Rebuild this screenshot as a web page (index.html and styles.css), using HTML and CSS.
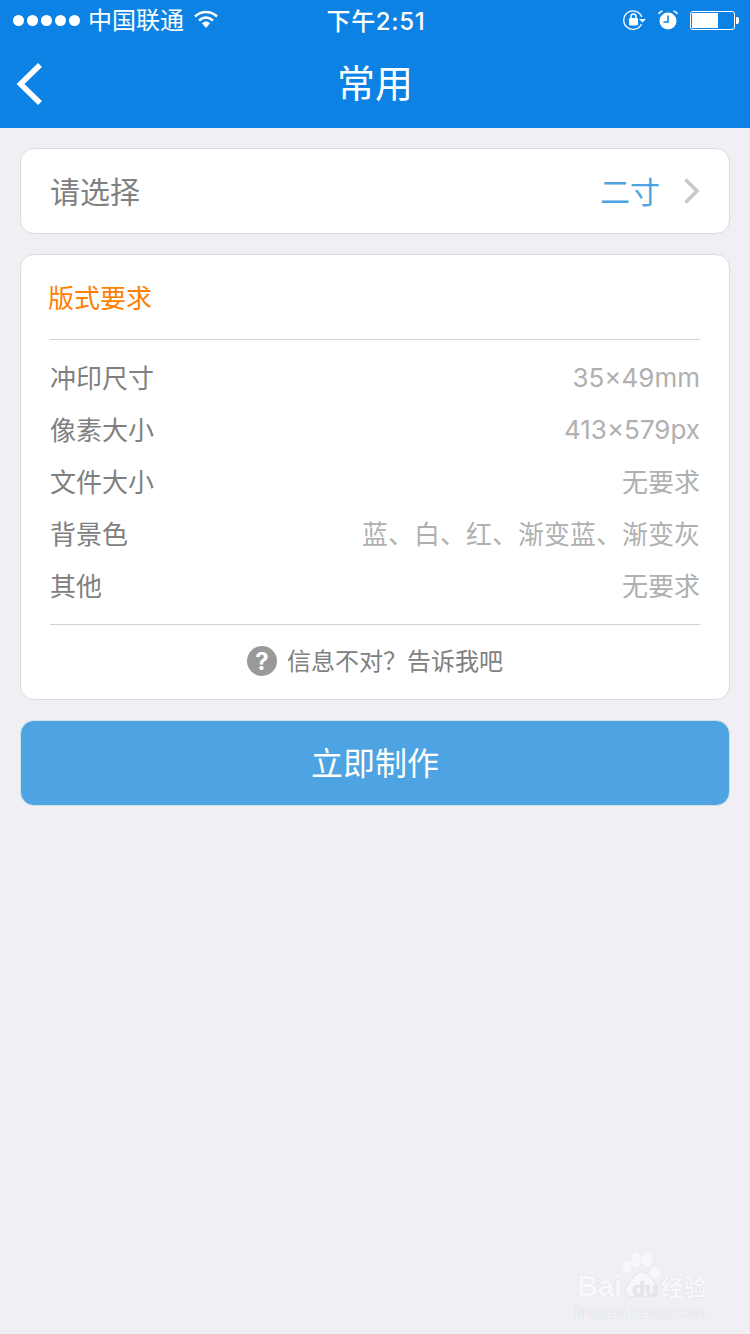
FILE: index.html
```html
<!DOCTYPE html>
<html lang="zh-CN">
<head>
<meta charset="UTF-8">
<meta name="viewport" content="width=device-width, initial-scale=1.0">
<title>常用</title>
<link rel="stylesheet" href="styles.css">
</head>
<body>

<div class="page">
    <header class="header">
        <div class="status">
            <div class="status-left">
                <span class="dots"><i></i><i></i><i></i><i></i><i></i></span>
                <span class="carrier">中国联通</span>
                <svg class="wifi" width="26" height="20" viewBox="0 0 26 20">
                    <path d="M2 7.500C8.500 1.500 17.500 1.500 24 7.500" fill="none" stroke="#fff" stroke-width="2.400"/>
                    <path d="M6 11.500C10.500 7.500 15.500 7.500 20 11.500" fill="none" stroke="#fff" stroke-width="2.400"/>
                    <path d="M9 14.200C11.500 12 14.500 12 17 14.200L13 19Z" fill="#fff"/>
                </svg>
            </div>
            <div class="status-time">下午2:51</div>
            <div class="status-right">
                <svg width="26" height="22" viewBox="0 0 26 22">
                    <path d="M21.500 15A9.300 9.300 0 1 1 21.800 8" fill="none" stroke="#fff" stroke-width="1.300"/>
                    <path d="M19 10h7l-3.500 3.500z" fill="#fff"/>
                    <rect x="9" y="9" width="9" height="7.500" rx="1" fill="#fff"/>
                    <path d="M11 9V7.500a2.500 2.500 0 0 1 5 0V9" fill="none" stroke="#fff" stroke-width="1.500"/>
                </svg>
                <svg class="alarm" width="22" height="22" viewBox="0 0 22 22">
                    <circle cx="11" cy="12" r="8.500" fill="#fff"/>
                    <path d="M11 6.500V13H6.500" fill="none" stroke="#0c83e4" stroke-width="1.500"/>
                    <path d="M1.500 5C2.500 3 3.500 2.500 5.500 2M20.500 5C19.500 3 18.500 2.500 16.500 2" fill="none" stroke="#fff" stroke-width="1.500"/>
                </svg>
                <span class="battery"><span class="battery-fill"></span></span>
            </div>
        </div>
        <div class="nav">
            <svg class="back" width="28" height="44" viewBox="0 0 28 44">
                <path d="M25 3L5.500 22L25 41" fill="none" stroke="#fff" stroke-width="5.500"/>
            </svg>
            <h1>常用</h1>
        </div>
    </header>

    <main class="content">
        <div class="card select-row">
            <span class="select-label">请选择</span>
            <span class="select-value">二寸</span>
            <svg class="arrow" width="18" height="28" viewBox="0 0 18 28">
                <path d="M2.500 2.500L14 14L2.500 25.500" fill="none" stroke="#c8c8c8" stroke-width="3.500"/>
            </svg>
        </div>

        <div class="card info">
            <div class="info-title">版式要求</div>
            <div class="info-rows">
                <div class="row"><span>冲印尺寸</span><span class="val val-num">35×49mm</span></div>
                <div class="row"><span>像素大小</span><span class="val val-num">413×579px</span></div>
                <div class="row"><span>文件大小</span><span class="val">无要求</span></div>
                <div class="row"><span>背景色</span><span class="val">蓝、白、红、渐变蓝、渐变灰</span></div>
                <div class="row"><span>其他</span><span class="val">无要求</span></div>
            </div>
            <div class="feedback">
                <span class="help">?</span>
                <span>信息不对？告诉我吧</span>
            </div>
        </div>

        <button class="make">立即制作</button>
    </main>

    <div class="watermark">
        <svg class="paw" width="44" height="46" viewBox="0 0 44 46">
            <ellipse cx="7" cy="14" rx="5" ry="6" fill="#f8f8fb"/>
            <ellipse cx="16" cy="7" rx="5" ry="7" fill="#f8f8fb"/>
            <ellipse cx="27" cy="7" rx="5" ry="7" fill="#f8f8fb"/>
            <ellipse cx="35" cy="20" rx="5" ry="6" fill="#f8f8fb"/>
            <path d="M22 19C28 19 31 26 35 30C41 36 37 44 29 44C25 44 19 43 14 44C6 45 3 37 8 31C13 27 15 19 22 19Z" fill="#f8f8fb" stroke="#e2e2e8" stroke-width="1"/>
        </svg>
        <div class="wm-main">
            <span class="wm-bai">Bai</span>
            <span class="wm-du">du</span>
            <span class="wm-cn">经验</span>
        </div>
        <div class="wm-url">jingyan.baidu.com</div>
    </div>
</div>

</body>
</html>
```

FILE: styles.css
```css
* {
    box-sizing: border-box;
}
body {
    margin: 0;
    font-family: Inter, "Noto Sans CJK SC", sans-serif;
    background-color: #efeff4;
}
.page {
    position: relative;
    height: 1334px;
    overflow: hidden;
}

.header {
    height: 128px;
    background-color: #0c83e4;
    color: #fff;
}
.status {
    height: 40px;
    position: relative;
    display: flex;
    justify-content: space-between;
    align-items: center;
    padding: 0 15px 0 13px;
}
.status-left {
    display: flex;
    align-items: center;
}
.dots {
    display: flex;
    gap: 3px;
}
.dots i {
    width: 11px;
    height: 11px;
    border-radius: 50%;
    background-color: #fff;
}
.carrier {
    margin: 2px 0 0 8px;
    font-size: 24px;
    line-height: 40px;
}
.wifi {
    margin-left: 9px;
    margin-top: -2px;
}
.status-time {
    position: absolute;
    left: 2px;
    right: 0;
    top: 2px;
    text-align: center;
    font-size: 24px;
    font-weight: 500;
    letter-spacing: 0.7px;
    line-height: 40px;
}
.status-right {
    display: flex;
    align-items: center;
}
.alarm {
    margin-left: 11px;
}
.battery {
    position: relative;
    width: 45px;
    height: 19px;
    margin: 1px 0 0 11px;
    border: 1px solid #fff;
    border-radius: 3px;
    padding: 1px;
}
.battery::after {
    content: "";
    position: absolute;
    right: -5px;
    top: 5px;
    width: 3px;
    height: 7px;
    background-color: #fff;
    border-radius: 0 2px 2px 0;
}
.battery-fill {
    display: block;
    width: 26px;
    height: 15px;
    background-color: #fff;
}
.nav {
    position: relative;
    height: 88px;
    display: flex;
    align-items: center;
    justify-content: center;
}
.nav h1 {
    margin: 0 0 8px;
    font-size: 38px;
    font-weight: 400;
}
.back {
    position: absolute;
    left: 15px;
    top: 22px;
}

.content {
    padding: 20px;
    display: flex;
    flex-direction: column;
    gap: 20px;
}
.card {
    background-color: #fff;
    border: 1px solid #dcdcdf;
    border-radius: 14px;
}

.select-row {
    height: 86px;
    display: flex;
    align-items: center;
    padding: 0 28px 0 29px;
}
.select-label {
    flex: 1;
    margin-bottom: 2px;
    font-size: 30px;
    color: #808080;
}
.select-value {
    margin-bottom: 2px;
    font-size: 30px;
    color: #4ea4e2;
}
.arrow {
    margin-left: 23px;
}

.info {
    height: 446px;
    padding: 0 29px;
    display: flex;
    flex-direction: column;
}
.info-title {
    height: 84px;
    padding-top: 24px;
    margin-left: -2px;
    font-size: 26px;
    line-height: 40px;
    color: #ff7f00;
}
.info-rows {
    padding: 10px 0 14px;
    border-top: 1px solid #d2d2d2;
    border-bottom: 1px solid #d2d2d2;
}
.row {
    height: 52px;
    display: flex;
    justify-content: space-between;
    align-items: center;
    font-size: 26px;
    color: #808080;
}
.val {
    color: #b0b0b0;
}
.val-num {
    margin-top: 2px;
}
.feedback {
    flex: 1;
    display: flex;
    justify-content: center;
    align-items: center;
    gap: 10px;
    padding-bottom: 5px;
    font-size: 24px;
    color: #808080;
}
.help {
    width: 30px;
    height: 30px;
    margin-top: 3px;
    border-radius: 50%;
    background-color: #999;
    color: #fff;
    font-size: 24px;
    font-weight: 700;
    line-height: 31px;
    text-align: center;
}

.make {
    height: 86px;
    padding-bottom: 5px;
    background-color: #4ea4e2;
    border: 1px solid #d5dde5;
    border-radius: 14px;
    color: #fff;
    font-family: inherit;
    font-size: 32px;
}

.watermark {
    position: absolute;
    left: 575px;
    top: 1253px;
    width: 140px;
    color: #f8f8fb;
    text-shadow: 0 0 1px #cfcfd6;
}
.paw {
    position: absolute;
    left: 45px;
    top: 0;
}
.wm-main {
    position: relative;
    display: flex;
    align-items: center;
    margin-top: 15px;
    height: 36px;
    font-family: "Liberation Sans", sans-serif;
}
.wm-bai {
    margin-left: 2px;
    font-size: 29px;
    font-weight: 700;
}
.wm-du {
    margin: 6px 3px 0 10px;
    font-size: 21px;
    font-weight: 700;
    color: #e6e6ec;
}
.wm-cn {
    font-family: "Noto Sans CJK SC", sans-serif;
    font-size: 23px;
    font-weight: 700;
}
.wm-url {
    position: relative;
    margin-top: -1px;
    font-size: 15px;
    letter-spacing: 0.1px;
    white-space: nowrap;
    text-shadow: 0 0 1px #bdbdc6;
}
```
